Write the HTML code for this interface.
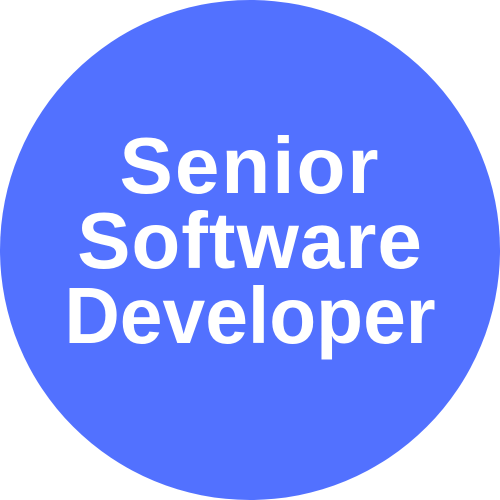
<!DOCTYPE html>
<html><head><style>
html,body{margin:0;padding:0;background:#fff;}
.c{position:absolute;left:0;top:0;width:500px;height:500px;border-radius:50%;background:#5271ff;}
.t{position:absolute;left:0;width:500px;text-align:center;color:#fff;font-family:"Liberation Sans",sans-serif;font-weight:bold;font-size:80px;line-height:78px;white-space:nowrap;}
</style></head><body>
<div class="c"></div>
<div class="t" style="top:127px;letter-spacing:2px">Senior</div>
<div class="t" style="top:202px;letter-spacing:1px">Software</div>
<div class="t" style="top:277px;transform:scaleX(0.96)">Developer</div>
</body></html>
